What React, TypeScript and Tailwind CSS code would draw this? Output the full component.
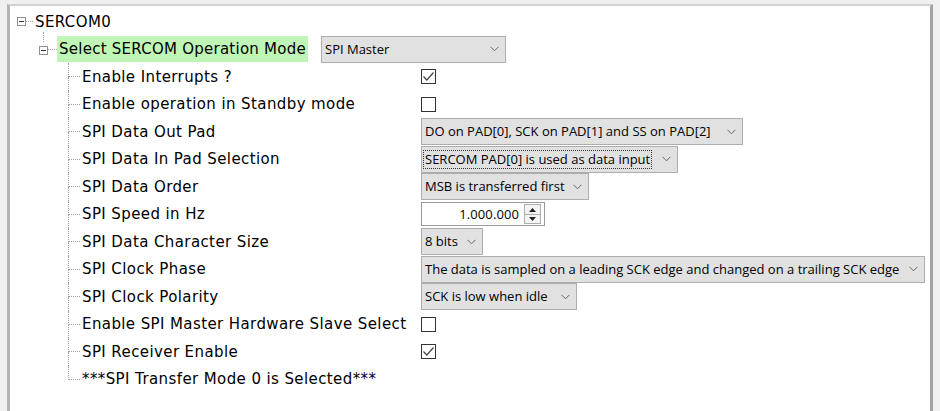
import React from 'react';

type Ctrl =
  | { kind: 'check'; checked: boolean }
  | { kind: 'combo'; value: string; width: number; focused?: boolean }
  | { kind: 'spin'; value: string }
  | { kind: 'none' };

interface Item {
  label: string;
  ctrl: Ctrl;
}

const items: Item[] = [
  { label: 'Enable Interrupts ?', ctrl: { kind: 'check', checked: true } },
  { label: 'Enable operation in Standby mode', ctrl: { kind: 'check', checked: false } },
  { label: 'SPI Data Out Pad', ctrl: { kind: 'combo', value: 'DO on PAD[0], SCK on PAD[1] and SS on PAD[2]', width: 322 } },
  { label: 'SPI Data In Pad Selection', ctrl: { kind: 'combo', value: 'SERCOM PAD[0] is used as data input', width: 257, focused: true } },
  { label: 'SPI Data Order', ctrl: { kind: 'combo', value: 'MSB is transferred first', width: 168 } },
  { label: 'SPI Speed in Hz', ctrl: { kind: 'spin', value: '1.000.000' } },
  { label: 'SPI Data Character Size', ctrl: { kind: 'combo', value: '8 bits', width: 62 } },
  { label: 'SPI Clock Phase', ctrl: { kind: 'combo', value: 'The data is sampled on a leading SCK edge and changed on a trailing SCK edge', width: 504 } },
  { label: 'SPI Clock Polarity', ctrl: { kind: 'combo', value: 'SCK is low when idle', width: 156 } },
  { label: 'Enable SPI Master Hardware Slave Select', ctrl: { kind: 'check', checked: false } },
  { label: 'SPI Receiver Enable', ctrl: { kind: 'check', checked: true } },
  { label: '***SPI Transfer Mode 0 is Selected***', ctrl: { kind: 'none' } },
];

function Expander() {
  return (
    <div className="w-[9px] h-[9px] border border-[#919191] bg-white flex items-center justify-center shrink-0">
      <div className="w-[5px] h-px bg-[#333]" />
    </div>
  );
}

function Chevron() {
  return (
    <svg width="9" height="6" viewBox="0 0 9 6" className="shrink-0 ml-[4px]">
      <path d="M0.5 0.8 L4.5 4.8 L8.5 0.8" fill="none" stroke="#666" strokeWidth="1" />
    </svg>
  );
}

function Combo({ value, width, focused }: { value: string; width: number; focused?: boolean }) {
  return (
    <div
      className="h-[27px] bg-[#e1e1e1] border border-[#adadad] flex items-center pl-[2px] pr-[6px] justify-between font-['Open_Sans',sans-serif] text-[13px] tracking-normal text-black"
      style={{ width }}
    >
      <span className={focused ? 'outline outline-1 outline-dotted outline-[#333] leading-[17px] px-px whitespace-nowrap' : 'leading-[17px] px-px whitespace-nowrap'}>
        {value}
      </span>
      <Chevron />
    </div>
  );
}

function Check({ checked }: { checked: boolean }) {
  return (
    <div className="w-[15px] h-[15px] border border-[#333] bg-white flex items-center justify-center">
      {checked && (
        <svg width="13" height="13" viewBox="0 0 13 13">
          <path d="M1.5 6.5 L4.8 10 L11.5 2.5" fill="none" stroke="#444" strokeWidth="1.2" />
        </svg>
      )}
    </div>
  );
}

function Spin({ value }: { value: string }) {
  return (
    <div className="w-[124px] h-[24px] bg-white border border-[#9a9a9a] flex items-center justify-end pr-[3px] font-['Open_Sans',sans-serif] text-[13px] tracking-[0.1px]">
      <span className="mr-[5px]">{value}</span>
      <div className="w-[17px] h-[20px] flex flex-col border border-[#adadad]">
        <div className="flex-1 flex items-center justify-center border-b border-[#adadad] bg-[#f4f4f4]">
          <svg width="7" height="4" viewBox="0 0 7 4"><path d="M0 4 L3.5 0 L7 4 Z" fill="#222" /></svg>
        </div>
        <div className="flex-1 flex items-center justify-center bg-[#f4f4f4]">
          <svg width="7" height="4" viewBox="0 0 7 4"><path d="M0 0 L3.5 4 L7 0 Z" fill="#222" /></svg>
        </div>
      </div>
    </div>
  );
}

function Control({ ctrl }: { ctrl: Ctrl }) {
  if (ctrl.kind === 'check') return <Check checked={ctrl.checked} />;
  if (ctrl.kind === 'combo') return <Combo value={ctrl.value} width={ctrl.width} focused={ctrl.focused} />;
  if (ctrl.kind === 'spin') return <Spin value={ctrl.value} />;
  return null;
}

export default function App() {
  return (
    <div className="w-[940px] h-[411px] bg-[#f0f0f0] pt-[4px] pl-[7px] pr-[7px] overflow-hidden">
      <div className="h-[420px] bg-white pt-[2px] border-t-2 border-t-[#d2d2d2] border-l-[3px] border-l-[#b4b4b4] border-r-[3px] border-r-[#a3a3a3] font-['DejaVu_Sans',Verdana,sans-serif] text-[15px] tracking-[0.4px] text-black">
        {/* root node */}
        <div className="h-[27.5px] flex items-center pl-[7px]">
          <Expander />
          <div className="w-[7px] border-t border-dotted border-[#a0a0a0]" />
          <span className="ml-[2px] whitespace-nowrap">SERCOM0</span>
        </div>

        {/* mode node */}
        <div className="h-[27.5px] flex items-center pl-[29px]">
          <div className="w-[9px] h-full flex flex-col items-center">
            <div className="h-[10px] border-l border-dotted border-[#a0a0a0] -mt-[4px] mb-[4px]" />
            <Expander />
          </div>
          <div className="w-[9px] border-t border-dotted border-[#a0a0a0]" />
          <div className="h-[26px] bg-[#bff5b5] flex items-center px-[2px] whitespace-nowrap tracking-[0.25px]">
            Select SERCOM Operation Mode
          </div>
          <div className="ml-[13px]">
            <Combo value="SPI Master" width={185} />
          </div>
        </div>

        {/* child nodes */}
        <div className="pl-[58px]">
          {items.map((it, i) => {
            const last = i === items.length - 1;
            return (
              <div key={it.label} className="h-[27.5px] flex items-center">
                <div className="w-[12px] h-full flex flex-col shrink-0">
                  <div className="flex-1 border-l border-b border-dotted border-[#a0a0a0]" />
                  <div className={last ? 'flex-1' : 'flex-1 border-l border-dotted border-[#a0a0a0]'} />
                </div>
                <div className="w-[341px] pl-[2px] whitespace-nowrap shrink-0">{it.label}</div>
                <Control ctrl={it.ctrl} />
              </div>
            );
          })}
        </div>
      </div>
    </div>
  );
}
